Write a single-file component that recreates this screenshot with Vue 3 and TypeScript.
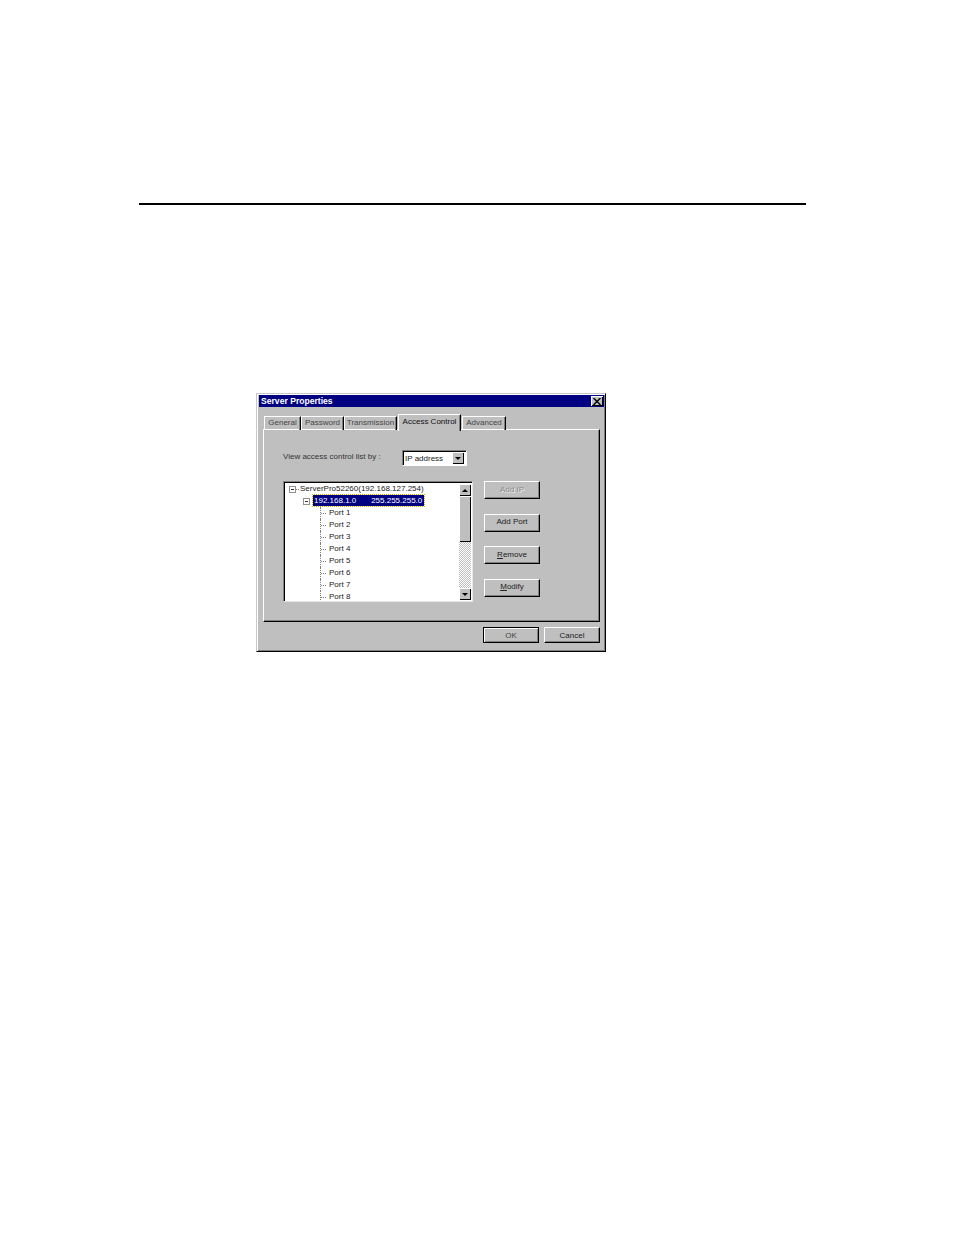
<script setup lang="ts">
const tabs = [
  { label: 'General', width: 37 },
  { label: 'Password', width: 43 },
  { label: 'Transmission', width: 53 },
  { label: 'Access Control', width: 63, active: true },
  { label: 'Advanced', width: 44 },
]
const ports = [1, 2, 3, 4, 5, 6, 7, 8]
</script>

<template>
  <main class="page">
    <hr class="rule" />
    <section class="dialog">
      <header class="title">
        <span>Server Properties</span>
        <button class="close" aria-label="Close">
          <svg width="8" height="7" viewBox="0 0 8 7"><path d="M0.5 0 7.5 7M7.5 0 0.5 7" stroke="#000" stroke-width="1.4" fill="none" /></svg>
        </button>
      </header>
      <nav class="tabs">
        <div
          v-for="t in tabs"
          :key="t.label"
          class="tab"
          :class="{ active: t.active }"
          :style="{ width: t.width + 'px' }"
        >{{ t.label }}</div>
      </nav>
      <div class="panel">
        <div class="view-row">
          <span class="view-label">View access control list by :</span>
          <div class="select">
            <span class="select-value">IP address</span>
            <span class="select-btn"><i class="arrow-down"></i></span>
          </div>
        </div>
        <div class="content">
          <div class="tree">
            <div class="tree-list">
              <div class="node root"><i class="box"></i><span>ServerPro52260(192.168.127.254)</span></div>
              <div class="node net"><i class="box"></i><span class="selected">192.168.1.0 &nbsp; &nbsp; 255.255.255.0</span></div>
              <div v-for="p in ports" :key="p" class="node port"><span>Port {{ p }}</span></div>
            </div>
            <div class="scroll">
              <span class="scroll-btn"><i class="arrow-up"></i></span>
              <span class="thumb"></span>
              <span class="track"></span>
              <span class="scroll-btn"><i class="arrow-down"></i></span>
            </div>
          </div>
          <div class="side">
            <button class="btn disabled">Add IP</button>
            <button class="btn">Add Port</button>
            <button class="btn"><u>R</u>emove</button>
            <button class="btn"><u>M</u>odify</button>
          </div>
        </div>
      </div>
      <footer class="footer">
        <button class="btn default">OK</button>
        <button class="btn">Cancel</button>
      </footer>
    </section>
  </main>
</template>

<style>
html, body { margin: 0; background: #fff; }
</style>

<style scoped>
.page {
  position: relative;
  width: 954px;
  height: 1235px;
  box-sizing: border-box;
  padding-top: 203px;
  background: #fff;
  overflow: hidden;
  font-family: "Liberation Sans", Arial, sans-serif;
}
.rule {
  margin: 0 148px 0 139px;
  height: 2px;
  border: 0;
  background: #000;
}
.dialog {
  margin: 188px 0 0 256px;
  width: 350px;
  height: 259px;
  box-sizing: border-box;
  padding: 2px 1px 2px 1px;
  background: #bfbfbf;
  border: 1px solid;
  border-color: #c8c8c8 #000 #000 #c8c8c8;
  box-shadow: inset 1px 1px 0 #fff, inset -1px -1px 0 #808080;
  font-size: 8px;
  color: #222;
}
.title {
  height: 12px;
  margin: -1px 0 0 1px;
  padding: 0 1px 0 2px;
  display: flex;
  align-items: center;
  justify-content: space-between;
  background: #000080;
  color: #fff;
  font-weight: 700;
  font-size: 8.6px;
}
.close {
  width: 12px;
  height: 10px;
  padding: 0;
  display: flex;
  align-items: center;
  justify-content: center;
  background: #bfbfbf;
  border: 0;
  box-shadow: inset 1px 1px 0 #fff, inset -1px -1px 0 #000;
}
.tabs {
  display: flex;
  align-items: flex-end;
  height: 22px;
  padding-left: 6px;
}
.tab {
  height: 14px;
  box-sizing: border-box;
  text-align: center;
  line-height: 12px;
  white-space: nowrap;
  color: #444;
  border-top: 1px solid #fff;
  border-left: 1px solid #fff;
  border-right: 1px solid #000;
  box-shadow: inset -1px 0 0 #808080;
  position: relative;
  margin-bottom: -1px;
}
.tab.active {
  height: 17px;
  margin-left: 1px;
  margin-right: 1px;
  line-height: 13px;
  color: #111;
  background: #bfbfbf;
  z-index: 1;
  margin-bottom: -2px;
  padding-bottom: 3px;
}
.panel {
  margin-left: 5px;
  width: 337px;
  height: 193px;
  box-sizing: border-box;
  border: 1px solid;
  border-color: #fff #000 #000 #fff;
  box-shadow: inset -1px -1px 0 #808080;
  padding: 20px 0 0 19px;
}
.view-row {
  display: flex;
  align-items: center;
  height: 16px;
}
.view-label {
  width: 119px;
  color: #333;
  white-space: nowrap;
  margin-top: -3px;
}
.select {
  width: 65px;
  height: 16px;
  box-sizing: border-box;
  display: flex;
  align-items: center;
  justify-content: space-between;
  padding: 2px;
  background: #fff;
  border: 1px solid;
  border-color: #808080 #fff #fff #808080;
  box-shadow: inset 1px 1px 0 #000;
}
.select-value { color: #222; }
.select-btn, .scroll-btn {
  display: flex;
  align-items: center;
  justify-content: center;
  box-sizing: border-box;
  background: #bfbfbf;
  box-shadow: inset 1px 1px 0 #fff, inset -1px -1px 0 #000;
}
.select-btn { width: 12px; height: 12px; }
.arrow-down, .arrow-up {
  width: 0;
  height: 0;
  border-left: 3px solid transparent;
  border-right: 3px solid transparent;
}
.arrow-down { border-top: 3px solid #000; }
.arrow-up { border-bottom: 3px solid #000; }
.content {
  display: flex;
  margin-top: 15px;
}
.tree {
  width: 189px;
  height: 120px;
  box-sizing: border-box;
  display: flex;
  justify-content: space-between;
  padding: 2px 1px 1px 2px;
  background: #fff;
  border-top: 1px solid #808080;
  border-left: 1px solid #808080;
  box-shadow: inset 1px 1px 0 #000, 1px 1px 0 #e6e6e6;
}
.tree-list {
  flex: 1;
  margin-top: -1px;
}
.node {
  position: relative;
  height: 12px;
  line-height: 12px;
  white-space: nowrap;
  color: #222;
}
.root { padding-left: 14px; }
.net { padding-left: 27px; }
.port { padding-left: 43px; }
.port:last-child { height: 9px; }
.box {
  position: absolute;
  top: 3px;
  width: 7px;
  height: 7px;
  box-sizing: border-box;
  border: 1px solid #909090;
  background: linear-gradient(#333, #333) center / 3px 1px no-repeat #fff;
}
.root .box { left: 3px; }
.net .box { left: 17px; }
.root::after {
  content: "";
  position: absolute;
  left: 10px;
  top: 6px;
  width: 3px;
  border-top: 1px dotted #808080;
}
.port::before {
  content: "";
  position: absolute;
  left: 34px;
  top: 0;
  height: 100%;
  border-left: 1px dotted #808080;
}
.port::after {
  content: "";
  position: absolute;
  left: 35px;
  top: 6px;
  width: 5px;
  border-top: 1px dotted #808080;
}
.selected {
  display: inline-block;
  height: 11px;
  line-height: 11px;
  padding: 0 2px 0 1px;
  background: #000080;
  color: #fff;
  word-spacing: 0.75px;
  outline: 1px dotted #c8b400;
}
.scroll {
  width: 12px;
  height: 116px;
  display: flex;
  flex-direction: column;
}
.scroll-btn { height: 12px; flex: none; }
.thumb {
  height: 46px;
  flex: none;
  background: #bfbfbf;
  box-shadow: inset 1px 1px 0 #fff, inset -1px -1px 0 #000;
}
.track {
  flex: 1;
  background: repeating-conic-gradient(#fff 0 25%, #bfbfbf 0 50%) 0 0 / 2px 2px;
}
.side {
  margin-left: 12px;
  display: flex;
  flex-direction: column;
  gap: 14.67px;
}
.btn {
  width: 56px;
  height: 18px;
  padding: 0 0 2px;
  background: #bfbfbf;
  border: 1px solid;
  border-color: #fff #000 #000 #fff;
  box-shadow: inset -1px -1px 0 #808080;
  font: inherit;
  color: #222;
}
.btn.disabled { color: #8a8a8a; text-shadow: 1px 1px 0 #eee; }
.btn.default {
  border-color: #000;
  box-shadow: inset 1px 1px 0 #fff, inset -1px -1px 0 #808080;
  color: #444;
}
.footer {
  display: flex;
  justify-content: flex-end;
  gap: 5px;
  margin-top: 5px;
  padding-right: 4px;
}
.footer .btn { height: 16px; padding: 0; }
</style>
